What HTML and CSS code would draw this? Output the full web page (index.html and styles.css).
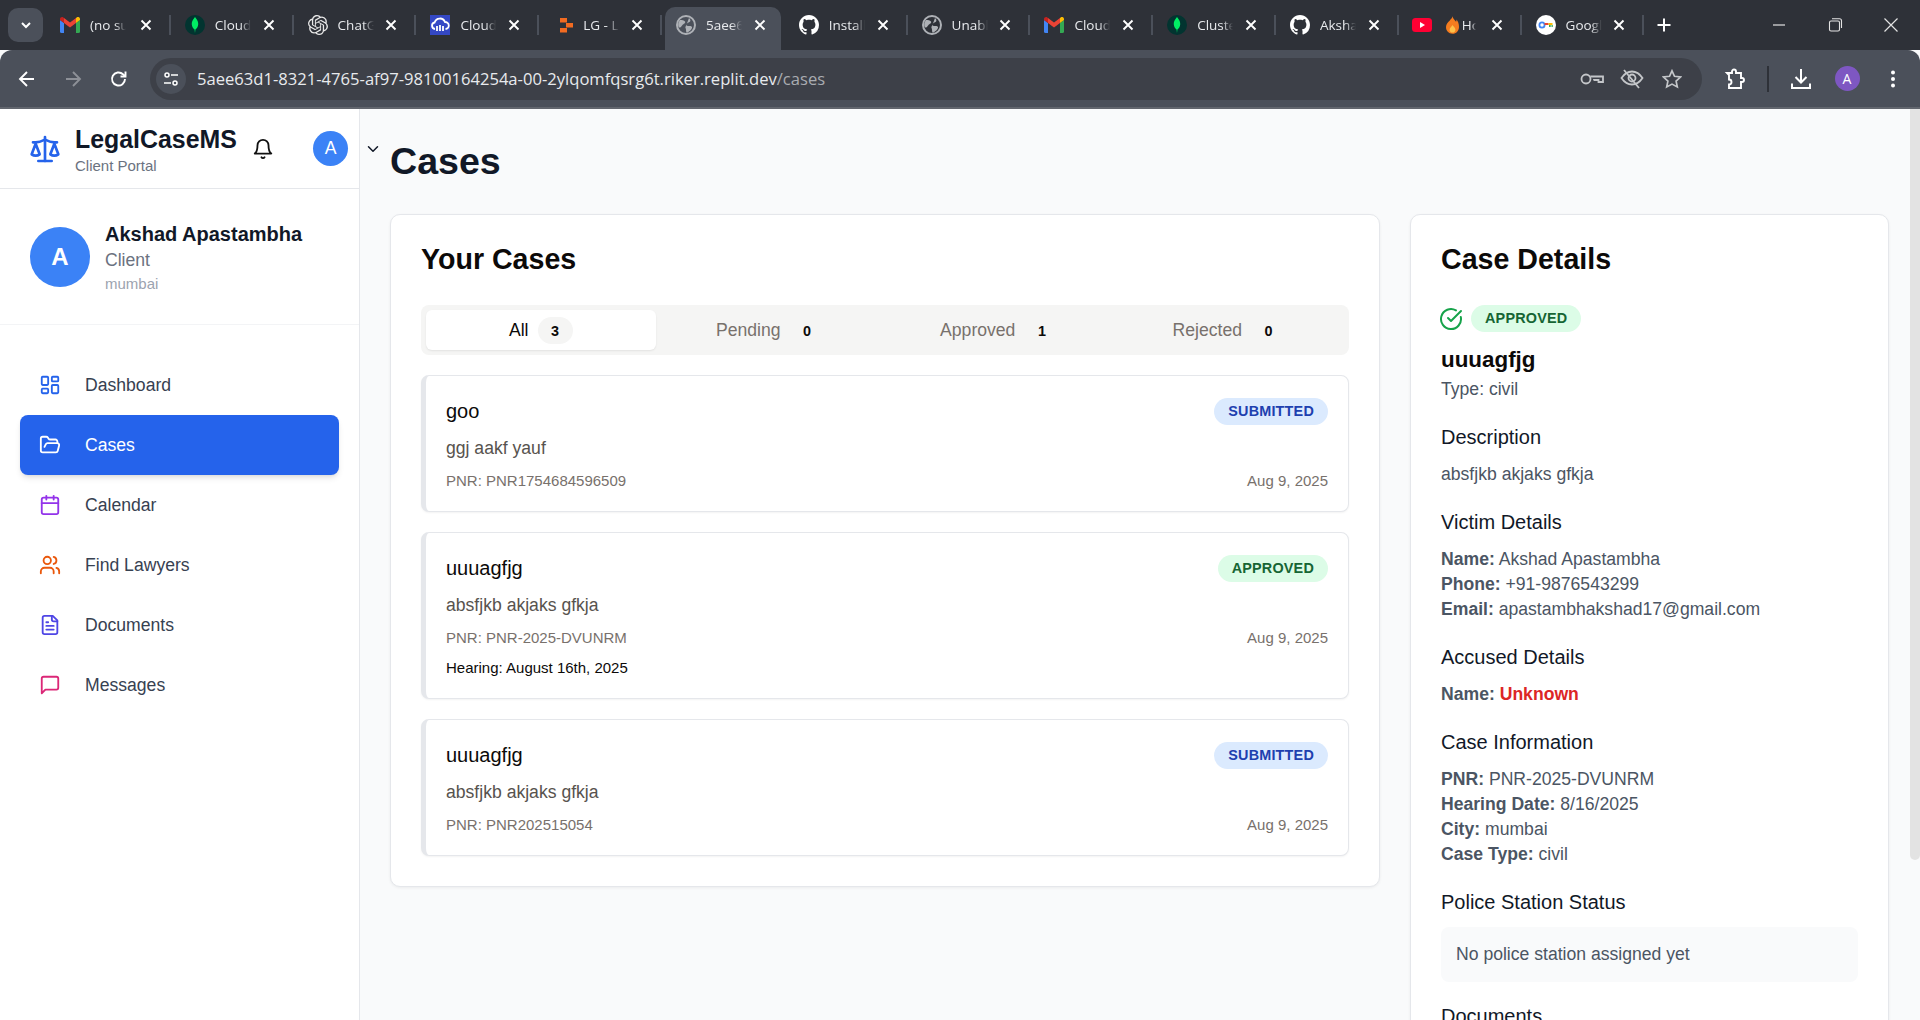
FILE: index.html
```html
<!DOCTYPE html>
<html lang="en">
<head>
  <meta charset="UTF-8">
  <title>Cases - LegalCaseMS</title>
  <link rel="stylesheet" href="styles.css">
</head>
<body>
<svg class="defs" width="0" height="0">
  <symbol id="gmail" viewBox="0 0 20 16">
    <path d="M0 14.5V3l4 3v10H1.5A1.5 1.5 0 0 1 0 14.5z" fill="#4285f4"/>
    <path d="M16 16V6l4-3v11.5a1.5 1.5 0 0 1-1.5 1.5z" fill="#34a853"/>
    <path d="M16 1v5l4-3V2c0-1.800-2-2.600-3-1.700z" fill="#fbbc04"/>
    <path d="M4 6V1l6 4.500L16 1v5l-6 4.500z" fill="#ea4335"/>
    <path d="M0 3v-.9C0 .4 2-.5 3 .3L4 1v5z" fill="#c5221f"/>
  </symbol>
  <symbol id="mongo" viewBox="0 0 20 20">
    <circle cx="10" cy="10" r="10" fill="#023430"/>
    <path d="M10 2c2.600 3 3.400 5.300 3.200 7.500-.2 2.600-1.700 4.300-2.800 5L10 18l-.4-3.500C8.500 13.800 7 12.100 6.800 9.500 6.600 7.300 7.400 5 10 2z" fill="#00ed64"/>
  </symbol>
  <symbol id="github" viewBox="0 0 16 16">
    <path fill="#fff" d="M8 0C3.580 0 0 3.580 0 8c0 3.540 2.290 6.530 5.470 7.590.4.070.55-.17.55-.38 0-.19-.01-.82-.01-1.490-2.010.37-2.530-.49-2.690-.94-.09-.23-.48-.94-.82-1.130-.28-.15-.68-.52-.01-.53.63-.01 1.080.58 1.230.82.720 1.210 1.870.87 2.330.66.070-.52.28-.87.51-1.070-1.780-.2-3.640-.89-3.640-3.950 0-.87.31-1.590.82-2.150-.08-.2-.36-1.020.08-2.120 0 0 .67-.21 2.200.82.64-.18 1.320-.27 2-.27.68 0 1.360.09 2 .27 1.530-1.040 2.200-.82 2.200-.82.44 1.100.16 1.920.08 2.120.51.56.82 1.270.82 2.150 0 3.070-1.870 3.750-3.650 3.950.29.25.54.73.54 1.480 0 1.070-.01 1.930-.01 2.200 0 .21.15.46.55.38A8.013 8.013 0 0 0 16 8c0-4.420-3.580-8-8-8z"/>
  </symbol>
  <symbol id="globe" viewBox="0 0 20 20">
    <circle cx="10" cy="10" r="9" fill="none" stroke="#aeb1b6" stroke-width="2"/>
    <path d="M4 5c2 0 4 0 5 1.500S7.500 9 6.500 10 5 13 3.500 12.500 1.500 8 4 5zM13 3c1.500 1.500 2 3 .5 4S11 8 10.500 9.500 12 11 13.500 11s3 .5 2.500 2-2.500 3.500-4.500 4.500-1-3-2-4.500C9 12 11 9 13 3z" fill="#aeb1b6"/>
  </symbol>
  <symbol id="close" viewBox="0 0 14 14">
    <path d="M2.500 2.500l9 9m0-9l-9 9" stroke="#fff" stroke-width="1.900" fill="none"/>
  </symbol>
</svg>

<header class="browser">
  <div class="tabstrip">
    <button class="tab-menu"><svg width="14" height="14" viewBox="0 0 14 14"><path d="M3 5l4 4 4-4" fill="none" stroke="#fff" stroke-width="2"/></svg></button>
    <div class="tab">
      <svg class="favicon" viewBox="0 0 20 16"><use href="#gmail"/></svg>
      <span class="tab-title">(no subject)</span>
      <svg class="tab-close"><use href="#close"/></svg>
    </div>
    <div class="tab">
      <svg class="favicon"><use href="#mongo"/></svg>
      <span class="tab-title">Cloud</span>
      <svg class="tab-close"><use href="#close"/></svg>
    </div>
    <div class="tab">
      <svg class="favicon" viewBox="0 0 24 24" fill="#e8e8e8"><path d="M22.2819 9.8211a5.9847 5.9847 0 0 0-.5157-4.9108 6.0462 6.0462 0 0 0-6.5098-2.9A6.0651 6.0651 0 0 0 4.9807 4.1818a5.9847 5.9847 0 0 0-3.9977 2.9 6.0462 6.0462 0 0 0 .7427 7.0966 5.98 5.98 0 0 0 .511 4.9107 6.051 6.051 0 0 0 6.5146 2.9001A5.9847 5.9847 0 0 0 13.2599 24a6.0557 6.0557 0 0 0 5.7718-4.2058 5.9894 5.9894 0 0 0 3.9977-2.9001 6.0557 6.0557 0 0 0-.7475-7.0729zm-9.022 12.6081a4.4755 4.4755 0 0 1-2.8764-1.0408l.1419-.0804 4.7783-2.7582a.7948.7948 0 0 0 .3927-.6813v-6.7369l2.02 1.1686a.071.071 0 0 1 .038.052v5.5826a4.504 4.504 0 0 1-4.4945 4.4944zm-9.6607-4.1254a4.4708 4.4708 0 0 1-.5346-3.0137l.142.0852 4.783 2.7582a.7712.7712 0 0 0 .7806 0l5.8428-3.3685v2.3324a.0804.0804 0 0 1-.0332.0615L9.74 19.9502a4.4992 4.4992 0 0 1-6.1408-1.6464zM2.3408 7.8956a4.485 4.485 0 0 1 2.3655-1.9728V11.6a.7664.7664 0 0 0 .3879.6765l5.8144 3.3543-2.0201 1.1685a.0757.0757 0 0 1-.071 0l-4.8303-2.7865A4.504 4.504 0 0 1 2.3408 7.872zm16.5963 3.8558L13.1038 8.364 15.1192 7.2a.0757.0757 0 0 1 .071 0l4.8303 2.7913a4.4944 4.4944 0 0 1-.6765 8.1042v-5.6772a.79.79 0 0 0-.407-.667zm2.0107-3.0231l-.142-.0852-4.7735-2.7818a.7759.7759 0 0 0-.7854 0L9.409 9.2297V6.8974a.0662.0662 0 0 1 .0284-.0615l4.8303-2.7866a4.4992 4.4992 0 0 1 6.6802 4.66zM8.3065 12.863l-2.02-1.1638a.0804.0804 0 0 1-.038-.0567V6.0742a4.4992 4.4992 0 0 1 7.3757-3.4537l-.142.0805L8.704 5.459a.7948.7948 0 0 0-.3927.6813zm1.0976-2.3654l2.602-1.4998 2.6069 1.4998v2.9994l-2.5974 1.4997-2.6067-1.4997Z"/></svg>
      <span class="tab-title">ChatGPT</span>
      <svg class="tab-close"><use href="#close"/></svg>
    </div>
    <div class="tab">
      <svg class="favicon" viewBox="0 0 20 20">
        <rect width="20" height="20" fill="#3448c5"/>
        <path d="M5 14a3.300 3.300 0 0 1-.4-6.500A5.500 5.500 0 0 1 15 7a3.500 3.500 0 0 1 .5 7" fill="none" stroke="#fff" stroke-width="1.800"/>
        <path d="M7 11v5M10 10v6M13 11v5" stroke="#fff" stroke-width="1.800"/>
      </svg>
      <span class="tab-title">Cloudinary</span>
      <svg class="tab-close"><use href="#close"/></svg>
    </div>
    <div class="tab">
      <svg class="favicon" viewBox="0 0 20 20" fill="#f26b21">
        <rect x="7" y="3" width="7" height="4.500"/>
        <rect x="13" y="8" width="7" height="4.500"/>
        <rect x="7" y="13" width="7" height="4.500"/>
      </svg>
      <span class="tab-title">LG - Logs</span>
      <svg class="tab-close"><use href="#close"/></svg>
    </div>
    <div class="tab is-active">
      <svg class="favicon"><use href="#globe"/></svg>
      <span class="tab-title">5aee63d1</span>
      <svg class="tab-close"><use href="#close"/></svg>
    </div>
    <div class="tab">
      <svg class="favicon" viewBox="0 0 16 16"><use href="#github"/></svg>
      <span class="tab-title">Install</span>
      <svg class="tab-close"><use href="#close"/></svg>
    </div>
    <div class="tab">
      <svg class="favicon"><use href="#globe"/></svg>
      <span class="tab-title">Unable</span>
      <svg class="tab-close"><use href="#close"/></svg>
    </div>
    <div class="tab">
      <svg class="favicon" viewBox="0 0 20 16"><use href="#gmail"/></svg>
      <span class="tab-title">Cloud</span>
      <svg class="tab-close"><use href="#close"/></svg>
    </div>
    <div class="tab">
      <svg class="favicon"><use href="#mongo"/></svg>
      <span class="tab-title">Cluster</span>
      <svg class="tab-close"><use href="#close"/></svg>
    </div>
    <div class="tab">
      <svg class="favicon" viewBox="0 0 16 16"><use href="#github"/></svg>
      <span class="tab-title">Akshad</span>
      <svg class="tab-close"><use href="#close"/></svg>
    </div>
    <div class="tab tab-yt">
      <svg class="favicon" viewBox="0 0 20 20">
        <rect y="3" width="20" height="14" rx="3.500" fill="#ff0033"/>
        <path d="M8 7l5 3-5 3z" fill="#fff"/>
      </svg>
      <svg class="tab-flame" viewBox="0 0 12 16">
        <path d="M6 0c.5 2.500 2 3.300 3.300 5 .3-.5.5-1.200.4-2C11 4.500 12 7 12 9.500 12 13.300 9.500 16 6 16s-6-2.700-6-6.200C0 7 2 5.500 3.500 3.800 4.700 2.500 5.800 1.500 6 0z" fill="#f57c1f"/>
        <path d="M6 8c.5 1.300 2.700 2.200 2.700 4.400A2.700 2.700 0 0 1 6 15a2.700 2.700 0 0 1-2.700-2.600C3.300 10.300 5.500 9.500 6 8z" fill="#fdc14a"/>
      </svg>
      <span class="tab-title is-short">Hot</span>
      <svg class="tab-close"><use href="#close"/></svg>
    </div>
    <div class="tab">
      <svg class="favicon" viewBox="0 0 20 20">
        <circle cx="10" cy="10" r="10" fill="#fff"/>
        <circle cx="6" cy="10" r="2.600" fill="none" stroke="#4285f4" stroke-width="1.800"/>
        <path d="M8.500 9h4" stroke="#ea4335" stroke-width="2"/>
        <path d="M12.500 9h4" stroke="#fbbc04" stroke-width="2"/>
        <path d="M13 10h1.700v2H13z" fill="#34a853"/>
        <path d="M15.500 10h1.300v2h-1.300z" fill="#34a853"/>
      </svg>
      <span class="tab-title">Google</span>
      <svg class="tab-close"><use href="#close"/></svg>
    </div>
    <svg class="tab-new" width="16" height="16" viewBox="0 0 16 16"><path d="M8 1.500v13M1.500 8h13" stroke="#fff" stroke-width="2"/></svg>
    <div class="window-controls">
      <svg width="16" height="16" viewBox="0 0 16 16"><path d="M2 8h12" stroke="#e3e3e3" stroke-width="1.200"/></svg>
      <svg width="16" height="16" viewBox="0 0 16 16" fill="none" stroke="#e3e3e3" stroke-width="1.100"><rect x="2.500" y="4" width="10" height="10" rx="1.500"/><path d="M5 1.800h7.500a2 2 0 0 1 2 2V11"/></svg>
      <svg width="16" height="16" viewBox="0 0 16 16"><path d="M1.500 1.500l13 13m0-13l-13 13" stroke="#e3e3e3" stroke-width="1.200"/></svg>
    </div>
  </div>
  <div class="toolbar">
    <span class="tool"><svg width="20" height="20" viewBox="0 0 20 20" fill="none" stroke="#fff" stroke-width="1.900"><path d="M17 10H3.500M10 3l-7 7 7 7"/></svg></span>
    <span class="tool"><svg width="20" height="20" viewBox="0 0 20 20" fill="none" stroke="#8d9097" stroke-width="1.900"><path d="M3 10h13.500M10 3l7 7-7 7"/></svg></span>
    <span class="tool"><svg width="20" height="20" viewBox="0 0 20 20" fill="none" stroke="#fff" stroke-width="1.900"><path d="M16 10a6.500 6.500 0 1 1-2-4.700L16 7"/><path d="M16.500 2.500V7.500H11.500"/></svg></span>
    <div class="omnibox">
      <span class="tune"><svg width="16" height="16" viewBox="0 0 16 16" fill="none" stroke="#fff" stroke-width="1.500"><circle cx="4" cy="4" r="2"/><path d="M8 4h7M1 12h7"/><circle cx="12" cy="12" r="2"/></svg></span>
      <span class="url">5aee63d1-8321-4765-af97-98100164254a-00-2ylqomfqsrg6t.riker.replit.dev<span class="url-path">/cases</span></span>
      <span class="omni-icon"><svg width="24" height="16" viewBox="0 0 24 16" fill="none" stroke="#c4c6c9" stroke-width="1.800"><circle cx="6" cy="8" r="4.500"/><path d="M10.300 5.500H23V11H18.500V9H14V9.500"/></svg></span>
      <span class="omni-icon"><svg width="24" height="22" viewBox="0 0 24 22" fill="none" stroke="#c4c6c9" stroke-width="1.800"><path d="M1.500 10c3-4.500 6.500-6.500 10.500-6.500S19.500 5.500 22.500 10c-3 4.500-6.500 6.500-10.500 6.500S4.500 14.500 1.500 10z"/><circle cx="12" cy="10" r="3.500"/><path d="M4 2l15 18"/></svg></span>
      <span class="omni-icon"><svg width="20" height="20" viewBox="0 0 20 20" fill="none" stroke="#c4c6c9" stroke-width="1.700"><path d="M10 1.800l2.500 5.500 6 .7-4.400 4.100 1.200 5.900L10 15.100 4.700 18l1.200-5.900L1.500 8l6-.7z"/></svg></span>
    </div>
    <span class="tool tool-ext"><svg width="22" height="22" viewBox="0 0 22 22" fill="none" stroke="#fff" stroke-width="1.900"><path d="M3 5h5V3.500a2 2 0 0 1 4 0V5h5v5h1a2 2 0 0 1 0 4h-1v6H5v-3.500a2.500 2.500 0 0 0 0-5V7z"/></svg></span>
    <span class="tool-sep"></span>
    <span class="tool tool-dl"><svg width="22" height="22" viewBox="0 0 22 22" fill="none" stroke="#fff" stroke-width="2"><path d="M11 1v13M5.500 9l5.500 5.500L16.500 9"/><path d="M2 15.500V20h18v-4.500"/></svg></span>
    <span class="tool"><span class="profile">A</span></span>
    <span class="tool"><svg width="6" height="18" viewBox="0 0 6 18" fill="#fff"><circle cx="3" cy="2.500" r="2"/><circle cx="3" cy="9" r="2"/><circle cx="3" cy="15.500" r="2"/></svg></span>
  </div>
</header>

<div class="app">
  <aside class="sidebar">
    <div class="brand">
      <svg class="icon brand-logo" viewBox="0 0 24 24"><path d="m16 16 3-8 3 8c-.87.65-1.920 1-3 1s-2.130-.35-3-1Z"/><path d="m2 16 3-8 3 8c-.87.65-1.920 1-3 1s-2.130-.35-3-1Z"/><path d="M7 21h10"/><path d="M12 3v18"/><path d="M3 7h2c2 0 5-1 7-2 2 1 5 2 7 2h2"/></svg>
      <div class="brand-text">
        <div class="brand-name">LegalCaseMS</div>
        <div class="brand-sub">Client Portal</div>
      </div>
      <svg class="icon bell" viewBox="0 0 24 24"><path d="M6 8a6 6 0 0 1 12 0c0 7 3 9 3 9H3s3-2 3-9"/><path d="M10.300 21a1.940 1.940 0 0 0 3.400 0"/></svg>
      <div class="avatar-small">A</div>
    </div>

    <div class="user">
      <div class="avatar-large">A</div>
      <div>
        <div class="user-name">Akshad Apastambha</div>
        <div class="user-role">Client</div>
        <div class="user-city">mumbai</div>
      </div>
    </div>

    <nav class="nav">
      <a class="nav-item">
        <svg class="icon nav-icon blue" viewBox="0 0 24 24"><rect x="3" y="3" width="7" height="9" rx="1"/><rect x="14" y="3" width="7" height="5" rx="1"/><rect x="14" y="12" width="7" height="9" rx="1"/><rect x="3" y="16" width="7" height="5" rx="1"/></svg>
        Dashboard
      </a>
      <a class="nav-item is-current">
        <svg class="icon nav-icon" viewBox="0 0 24 24"><path d="m6 14 1.500-2.900A2 2 0 0 1 9.240 10H20a2 2 0 0 1 1.940 2.500l-1.540 6a2 2 0 0 1-1.950 1.500H4a2 2 0 0 1-2-2V5a2 2 0 0 1 2-2h3.900a2 2 0 0 1 1.690.9l.81 1.200a2 2 0 0 0 1.670.9H18a2 2 0 0 1 2 2v2"/></svg>
        Cases
      </a>
      <a class="nav-item">
        <svg class="icon nav-icon purple" viewBox="0 0 24 24"><path d="M8 2v4"/><path d="M16 2v4"/><rect x="3" y="4" width="18" height="18" rx="2"/><path d="M3 10h18"/></svg>
        Calendar
      </a>
      <a class="nav-item">
        <svg class="icon nav-icon orange" viewBox="0 0 24 24"><path d="M16 21v-2a4 4 0 0 0-4-4H6a4 4 0 0 0-4 4v2"/><circle cx="9" cy="7" r="4"/><path d="M22 21v-2a4 4 0 0 0-3-3.870"/><path d="M16 3.130a4 4 0 0 1 0 7.750"/></svg>
        Find Lawyers
      </a>
      <a class="nav-item">
        <svg class="icon nav-icon indigo" viewBox="0 0 24 24"><path d="M15 2H6a2 2 0 0 0-2 2v16a2 2 0 0 0 2 2h12a2 2 0 0 0 2-2V7Z"/><path d="M14 2v4a2 2 0 0 0 2 2h4"/><path d="M10 9H8"/><path d="M16 13H8"/><path d="M16 17H8"/></svg>
        Documents
      </a>
      <a class="nav-item">
        <svg class="icon nav-icon pink" viewBox="0 0 24 24"><path d="M21 15a2 2 0 0 1-2 2H7l-4 4V5a2 2 0 0 1 2-2h14a2 2 0 0 1 2 2z"/></svg>
        Messages
      </a>
    </nav>
  </aside>

  <main class="main">
    <div class="page-head">
      <svg class="icon chevron" viewBox="0 0 24 24"><path d="m6 9 6 6 6-6"/></svg>
      <h1>Cases</h1>
    </div>

    <div class="columns">
      <section class="panel">
        <h2>Your Cases</h2>
        <div class="filters">
          <div class="filter is-selected">All <span class="count">3</span></div>
          <div class="filter">Pending <span class="count">0</span></div>
          <div class="filter">Approved <span class="count">1</span></div>
          <div class="filter">Rejected <span class="count">0</span></div>
        </div>

        <article class="case">
          <div class="case-top">
            <span class="case-title">goo</span>
            <span class="status submitted">SUBMITTED</span>
          </div>
          <p class="case-desc">ggj aakf yauf</p>
          <div class="case-meta"><span>PNR: PNR1754684596509</span><span>Aug 9, 2025</span></div>
        </article>

        <article class="case">
          <div class="case-top">
            <span class="case-title">uuuagfjg</span>
            <span class="status approved">APPROVED</span>
          </div>
          <p class="case-desc">absfjkb akjaks gfkja</p>
          <div class="case-meta"><span>PNR: PNR-2025-DVUNRM</span><span>Aug 9, 2025</span></div>
          <div class="case-hearing">Hearing: August 16th, 2025</div>
        </article>

        <article class="case">
          <div class="case-top">
            <span class="case-title">uuuagfjg</span>
            <span class="status submitted">SUBMITTED</span>
          </div>
          <p class="case-desc">absfjkb akjaks gfkja</p>
          <div class="case-meta"><span>PNR: PNR202515054</span><span>Aug 9, 2025</span></div>
        </article>
      </section>

      <section class="panel panel-details">
        <h2>Case Details</h2>
        <div class="detail-status">
          <svg class="icon check" viewBox="0 0 24 24"><path d="M21.801 10A10 10 0 1 1 17 3.335"/><path d="m9 11 3 3L22 4"/></svg>
          <span class="status approved">APPROVED</span>
        </div>
        <div class="detail-title">uuuagfjg</div>
        <div class="detail-type">Type: civil</div>

        <h3>Description</h3>
        <p class="detail-text">absfjkb akjaks gfkja</p>

        <h3>Victim Details</h3>
        <p class="detail-text"><b>Name:</b> Akshad Apastambha</p>
        <p class="detail-text"><b>Phone:</b> +91-9876543299</p>
        <p class="detail-text"><b>Email:</b> apastambhakshad17@gmail.com</p>

        <h3>Accused Details</h3>
        <p class="detail-text"><b>Name:</b> <b class="unknown">Unknown</b></p>

        <h3>Case Information</h3>
        <p class="detail-text"><b>PNR:</b> PNR-2025-DVUNRM</p>
        <p class="detail-text"><b>Hearing Date:</b> 8/16/2025</p>
        <p class="detail-text"><b>City:</b> mumbai</p>
        <p class="detail-text"><b>Case Type:</b> civil</p>

        <h3>Police Station Status</h3>
        <div class="police-box">No police station assigned yet</div>

        <h3>Documents</h3>
      </section>
    </div>
  </main>

  <div class="scrollbar"><div class="scrollbar-thumb"></div></div>
</div>
</body>
</html>
```

FILE: styles.css
```css
html, body {
    margin: 0;
    height: 100%;
    overflow: hidden;
}
body {
    font-family: "Liberation Sans", Arial, sans-serif;
    color: #111827;
    background: #f9fafb;
}
.defs {
    display: block;
    height: 0;
}

/* browser chrome */
.browser {
    font-family: "Open Sans", "Noto Sans", sans-serif;
    color: #e8eaed;
}
.tabstrip {
    display: flex;
    align-items: center;
    height: 50px;
    background: #2e3138;
}
.tab-menu {
    display: flex;
    align-items: center;
    justify-content: center;
    flex: none;
    width: 35px;
    height: 34px;
    margin: 0 3px 0 8px;
    padding: 0;
    border: 0;
    border-radius: 10px;
    background: #4b505a;
}
.tab {
    position: relative;
    display: flex;
    align-items: center;
    flex: none;
    box-sizing: border-box;
    width: 122.8px;
    height: 50px;
    padding: 0 16px;
}
.tab:first-of-type {
    padding-left: 14px;
}
.tab-yt {
    padding-left: 15px;
}
.tab::after {
    content: "";
    position: absolute;
    right: -2px;
    top: 15px;
    width: 2px;
    height: 20px;
    background: #4b505a;
}
.tab.is-active::after {
    display: none;
}
.tab.is-active::before {
    content: "";
    position: absolute;
    left: 5px;
    right: 2px;
    top: 7px;
    bottom: 0;
    z-index: 0;
    border-radius: 10px 10px 0 0;
    background: #4b505a;
}
.tab > * {
    position: relative;
    z-index: 1;
}
.favicon {
    flex: none;
    width: 20px;
    height: 20px;
}
.tab-flame {
    flex: none;
    width: 13px;
    height: 18px;
    margin-left: 14px;
}
.tab-title {
    flex: none;
    width: 36px;
    margin-left: 10px;
    overflow: hidden;
    white-space: nowrap;
    font-size: 13.5px;
    -webkit-mask-image: linear-gradient(to right, #000 70%, transparent 100%);
    mask-image: linear-gradient(to right, #000 70%, transparent 100%);
}
.tab-title.is-short {
    width: 14px;
    margin-left: 3px;
}
.tab-close {
    flex: none;
    width: 14px;
    height: 14px;
    margin-left: auto;
}
.tab-new {
    flex: none;
    margin-left: 14px;
}
.window-controls {
    display: flex;
    align-items: center;
    gap: 40px;
    margin-left: auto;
    margin-right: 21px;
}
.toolbar {
    display: flex;
    align-items: center;
    height: 57px;
    padding-left: 4px;
    border-radius: 12px 12px 0 0;
    background: #4b505a;
    border-bottom: 2px solid #62666e;
    box-sizing: content-box;
}
.tool {
    display: flex;
    align-items: center;
    justify-content: center;
    flex: none;
    width: 46px;
    height: 44px;
}
.omnibox {
    display: flex;
    align-items: center;
    box-sizing: border-box;
    flex: none;
    width: 1552px;
    height: 42px;
    margin: 0 10px 0 8px;
    padding: 0 10px 0 6px;
    border-radius: 21px;
    background: #3d4048;
}
.tune {
    display: flex;
    align-items: center;
    justify-content: center;
    flex: none;
    width: 30px;
    height: 30px;
    border-radius: 50%;
    background: #4b505a;
}
.url {
    margin-left: 11px;
    font-size: 16.6px;
    white-space: nowrap;
}
.url-path {
    color: #a9acb1;
}
.omni-icon {
    display: flex;
    align-items: center;
    justify-content: center;
    flex: none;
    width: 40px;
}
.omni-icon:nth-child(3) {
    margin-left: auto;
}
.tool-sep {
    flex: none;
    width: 2px;
    height: 26px;
    margin: 0 9px 0 9px;
    background: #2e3138;
}
.profile {
    display: flex;
    align-items: center;
    justify-content: center;
    width: 25px;
    height: 25px;
    border-radius: 50%;
    background: #7e57c2;
    color: #fff;
    font-size: 14px;
}

/* app layout */
.app {
    display: flex;
    height: 911px;
    overflow: hidden;
}
.sidebar {
    flex: none;
    box-sizing: border-box;
    width: 360px;
    background: #fff;
    border-right: 1px solid #e5e7eb;
}
.icon {
    fill: none;
    stroke: currentColor;
    stroke-width: 2;
    stroke-linecap: round;
    stroke-linejoin: round;
}
.brand {
    display: flex;
    align-items: center;
    height: 79px;
    padding-left: 29px;
    border-bottom: 1px solid #e5e7eb;
}
.brand-logo {
    flex: none;
    width: 32px;
    height: 32px;
    color: #2563eb;
}
.brand-text {
    flex: none;
    margin-left: 14px;
    width: 163px;
    padding-top: 2px;
}
.brand-name {
    font-size: 24.9px;
    line-height: 32px;
    font-weight: 700;
    color: #111827;
}
.brand-sub {
    margin-top: 1px;
    font-size: 15px;
    line-height: 20px;
    color: #6b7280;
}
.bell {
    flex: none;
    width: 22px;
    height: 22px;
    margin-left: 14px;
    color: #111;
}
.avatar-small {
    display: flex;
    align-items: center;
    justify-content: center;
    flex: none;
    width: 35px;
    height: 35px;
    margin-left: 39px;
    border-radius: 50%;
    background: #3b82f6;
    color: #fff;
    font-size: 17.6px;
}
.user {
    display: flex;
    align-items: center;
    gap: 15px;
    height: 135px;
    padding-left: 30px;
    border-bottom: 1px solid #f3f4f6;
}
.avatar-large {
    display: flex;
    align-items: center;
    justify-content: center;
    flex: none;
    width: 60px;
    height: 60px;
    border-radius: 50%;
    background: #3b82f6;
    color: #fff;
    font-size: 24px;
    font-weight: 700;
}
.user-name {
    padding-top: 2px;
    font-size: 20px;
    line-height: 28px;
    font-weight: 700;
    color: #111827;
}
.user-role {
    font-size: 17.6px;
    line-height: 25px;
    color: #6b7280;
}
.user-city {
    font-size: 15px;
    line-height: 22px;
    color: #9ca3af;
}
.nav {
    display: flex;
    flex-direction: column;
    margin: 30px 20px 0;
}
.nav-item {
    display: flex;
    align-items: center;
    gap: 24px;
    height: 60px;
    padding-left: 19px;
    border-radius: 8px;
    font-size: 17.6px;
    color: #374151;
}
.nav-icon {
    flex: none;
    width: 22px;
    height: 22px;
}
.nav-item.is-current {
    background: #2563eb;
    color: #fff;
    box-shadow: 0 4px 6px -1px rgba(0, 0, 0, .1), 0 2px 4px -2px rgba(0, 0, 0, .1);
}
.blue { color: #2563eb; }
.purple { color: #9333ea; }
.orange { color: #ea580c; }
.indigo { color: #4f46e5; }
.pink { color: #db2777; }

/* main column */
.main {
    flex: 1;
    min-width: 0;
    overflow: hidden;
}
.page-head {
    display: flex;
    align-items: flex-start;
    height: 105px;
    padding-left: 4px;
}
.chevron {
    flex: none;
    width: 18px;
    height: 18px;
    margin-top: 31px;
}
.page-head h1 {
    margin: 30px 0 0 8px;
    font-size: 37.6px;
    line-height: 44px;
    font-weight: 700;
    color: #111827;
}
.columns {
    display: grid;
    grid-template-columns: 990px 479px;
    gap: 30px;
    align-items: start;
    margin-left: 30px;
}
.panel {
    box-sizing: border-box;
    padding: 25px 30px 30px;
    background: #fff;
    border: 1px solid #e5e7eb;
    border-radius: 10px;
    box-shadow: 0 1px 3px rgba(0, 0, 0, .06);
}
.panel h2 {
    margin: 0 0 26px;
    font-size: 28.6px;
    line-height: 39px;
    font-weight: 700;
    color: #0c0a09;
}

/* filter tabs */
.filters {
    display: grid;
    grid-template-columns: repeat(4, 1fr);
    box-sizing: border-box;
    height: 50px;
    margin-bottom: 20px;
    padding: 5px;
    border-radius: 8px;
    background: #f5f5f4;
}
.filter {
    display: flex;
    align-items: center;
    justify-content: center;
    gap: 9px;
    padding-top: 1px;
    border-radius: 6px;
    font-size: 17.6px;
    color: #78716c;
}
.filter.is-selected {
    background: #fff;
    color: #0c0a09;
    box-shadow: 0 1px 2px rgba(0, 0, 0, .08);
}
.count {
    display: flex;
    align-items: center;
    justify-content: center;
    width: 35px;
    height: 27px;
    border-radius: 14px;
    font-size: 14.4px;
    font-weight: 700;
    color: #0c0a09;
}
.is-selected .count {
    background: #f5f5f4;
}

/* case cards */
.case {
    margin-top: 20px;
    padding: 22px 20px 20px;
    border: 1px solid #e5e7eb;
    border-left: 5px solid #e5e7eb;
    border-radius: 8px;
    background: #fff;
    box-shadow: 0 1px 2px rgba(0, 0, 0, .05);
}
.case-top {
    display: flex;
    align-items: center;
    justify-content: space-between;
}
.case-title {
    font-size: 20px;
    line-height: 27px;
    color: #0c0a09;
}
.status {
    box-sizing: border-box;
    height: 27px;
    padding: 0 14px;
    border-radius: 14px;
    font-size: 14.4px;
    line-height: 27px;
    font-weight: 700;
    letter-spacing: .2px;
}
.submitted {
    background: #dbeafe;
    color: #1e40af;
}
.approved {
    background: #dcfce7;
    color: #166534;
}
.case-desc {
    margin: 10px 0 9px;
    font-size: 17.6px;
    line-height: 26px;
    color: #57534e;
}
.case-meta {
    display: flex;
    justify-content: space-between;
    font-size: 15px;
    line-height: 21px;
    color: #78716c;
}
.case-hearing {
    margin-top: 9px;
    font-size: 15px;
    line-height: 21px;
    color: #0c0a09;
}

/* details panel */
.panel-details {
    height: 860px;
}
.detail-status {
    display: flex;
    align-items: center;
    gap: 10px;
}
.check {
    flex: none;
    width: 24px;
    height: 24px;
    margin-left: -2px;
    margin-right: -2px;
    color: #16a34a;
}
.detail-title {
    margin-top: 12px;
    font-size: 22.4px;
    line-height: 31px;
    font-weight: 700;
    color: #0c0a09;
}
.detail-type {
    margin-top: 2px;
    font-size: 17.6px;
    line-height: 25px;
    color: #4b5563;
}
.panel-details h3 {
    margin: 21px 0 11px;
    font-size: 20px;
    line-height: 28px;
    font-weight: 400;
    color: #111827;
}
.detail-text {
    margin: 0;
    font-size: 17.6px;
    line-height: 25px;
    color: #4b5563;
}
.unknown {
    color: #dc2626;
}
.police-box {
    box-sizing: border-box;
    height: 55px;
    margin-bottom: -1px;
    padding: 0 15px;
    border-radius: 8px;
    background: #f9fafb;
    font-size: 17.6px;
    line-height: 55px;
    color: #4b5563;
}

/* page scrollbar */
.scrollbar {
    flex: none;
    width: 10px;
    background: #f9fafb;
}
.scrollbar-thumb {
    height: 751px;
    border-radius: 0 0 5px 5px;
    background: #e3e3e3;
}
```
